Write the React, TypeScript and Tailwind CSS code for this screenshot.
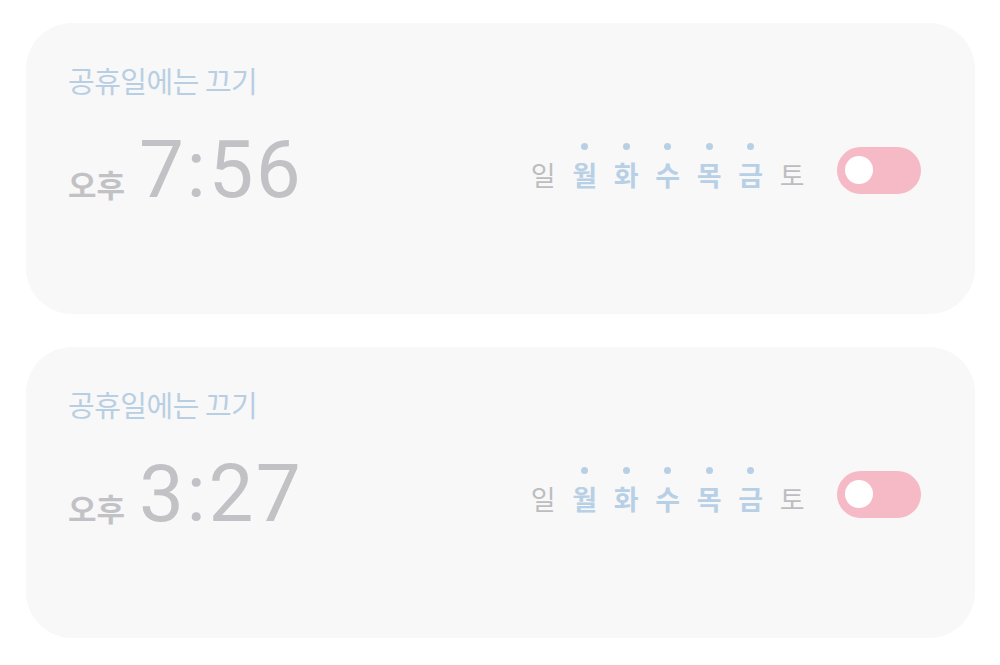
const alarms = [
  { ampm: "오후", time: "7:56" },
  { ampm: "오후", time: "3:27" },
];

const days = [
  { label: "일", on: false },
  { label: "월", on: true },
  { label: "화", on: true },
  { label: "수", on: true },
  { label: "목", on: true },
  { label: "금", on: true },
  { label: "토", on: false },
];

const font = { fontFamily: '"Noto Sans CJK KR", Roboto, sans-serif' };

function AlarmCard({ ampm, time }: { ampm: string; time: string }) {
  return (
    <div className="h-[291px] rounded-[46px] bg-[#f8f8f8] pl-[42px] pr-[54px] pt-[37px]">
      <div className="text-[29px] leading-[40px] tracking-[-0.5px] text-[#b8cfe3]">
        공휴일에는 끄기
      </div>

      <div className="mt-[30px] flex items-center justify-between">
        <div className="flex items-baseline gap-[14px] text-[#c2c2c6]">
          <span className="text-[31px] font-bold leading-none">{ampm}</span>
          <span
            className="text-[80px] leading-none tracking-[2.5px]"
            style={{ fontFamily: "Roboto, sans-serif" }}
          >
            {time}
          </span>
        </div>

        <div className="flex items-center">
          <div className="mr-[33px] flex gap-[18px]">
            {days.map((d) => (
              <div key={d.label} className="flex w-[23.5px] flex-col items-center pb-[5px]">
                <span
                  className={
                    d.on
                      ? "h-[7px] w-[7px] rounded-full bg-[#b8d0e5]"
                      : "h-[7px] w-[7px]"
                  }
                />
                <span
                  className={
                    d.on
                      ? "mt-[8px] text-[27px] font-bold leading-[34px] text-[#b8d0e5]"
                      : "mt-[8px] text-[27px] leading-[34px] text-[#bdbdc0]"
                  }
                >
                  {d.label}
                </span>
              </div>
            ))}
          </div>

          <div className="flex h-[47px] w-[84px] items-center rounded-full bg-[#f5bac5] pl-[8px]">
            <div className="h-[28px] w-[28px] rounded-full bg-white" />
          </div>
        </div>
      </div>
    </div>
  );
}

export default function App() {
  return (
    <div
      className="flex min-h-[665px] flex-col gap-[33px] bg-white pl-[26px] pr-[25px] pt-[23px]"
      style={font}
    >
      {alarms.map((a) => (
        <AlarmCard key={a.time} ampm={a.ampm} time={a.time} />
      ))}
    </div>
  );
}
